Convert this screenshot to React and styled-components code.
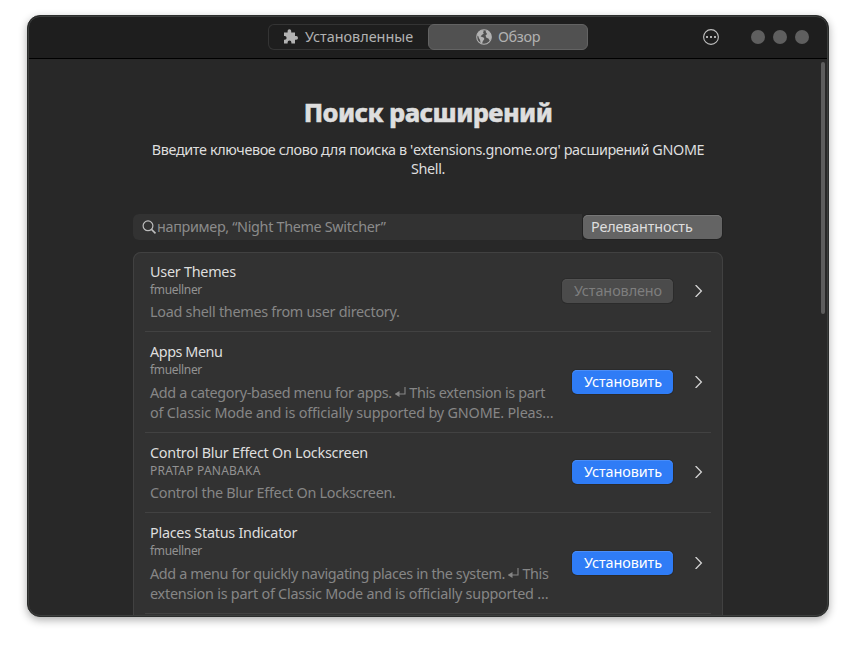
import React from 'react';
import styled, { createGlobalStyle } from 'styled-components';

const Global = createGlobalStyle`
  * { box-sizing: border-box; }
  body { margin: 0; background: #fff; overflow: hidden; }
  button, input { font: inherit; margin: 0; }
`;

const Desktop = styled.div`
  width: 856px;
  height: 656px;
  padding: 15px 27px 39px;
  font: 14.4px/20px 'Noto Sans', sans-serif;
  color: #dedede;
`;

const Window = styled.div`
  position: relative;
  height: 602px;
  display: flex;
  flex-direction: column;
  border-radius: 13px;
  overflow: hidden;
  background: #282828;
  border: 1px solid #2b2d2c;
  box-shadow: 0 3px 9px rgba(0, 0, 0, 0.32);
  &::after {
    content: '';
    position: absolute;
    inset: 0;
    border: 1px solid #3c3e3d;
    border-radius: 12px;
    pointer-events: none;
  }
`;

const HeaderBar = styled.header`
  flex: none;
  height: 43px;
  display: grid;
  grid-template-columns: 1fr 320px 1fr;
  align-items: center;
  background: #1e1e1e;
  border-bottom: 1px solid #000;
`;

const Switcher = styled.nav`
  grid-column: 2;
  display: flex;
  height: 26px;
  border-radius: 6px;
  box-shadow: inset 0 0 0 1px #343434;
`;

const Tab = styled.button`
  width: 160px;
  display: flex;
  align-items: center;
  justify-content: center;
  gap: 6px;
  padding: 0;
  border: 1px solid ${(p) => (p.$active ? '#636363' : 'transparent')};
  border-radius: 6px;
  background: ${(p) => (p.$active ? '#515151' : 'transparent')};
  color: #b2b2b2;
  letter-spacing: ${(p) => (p.$active ? '-0.35px' : '0')};
`;

const Controls = styled.div`
  display: flex;
  align-items: center;
  justify-content: flex-end;
  gap: 8px;
  padding-right: 19px;
`;

const MenuIcon = styled.svg`
  width: 16px;
  height: 16px;
  margin-right: 24px;
`;

const Dot = styled.span`
  width: 14px;
  height: 14px;
  border-radius: 50%;
  background: #5f5f5f;
`;

const Page = styled.main`
  flex: 1;
  min-height: 0;
  position: relative;
  padding: 37px 105px 0;
  overflow: hidden;
`;

const ScrollThumb = styled.div`
  position: absolute;
  top: 3px;
  right: 3px;
  width: 4px;
  height: 252px;
  border-radius: 2px;
  background: #5d5d5d;
`;

const Title = styled.h1`
  margin: 0;
  height: 32px;
  font-size: 25.5px;
  font-weight: 800;
  line-height: 32px;
  letter-spacing: -0.6px;
  -webkit-text-stroke: 0.5px #dedede;
  text-align: center;
`;

const Intro = styled.p`
  margin: 12px 0 36px;
  line-height: 19px;
  letter-spacing: -0.37px;
  text-align: center;
  white-space: pre-line;
`;

const SearchRow = styled.div`
  display: flex;
  align-items: center;
  gap: 1px;
  width: 589px;
  height: 26px;
  margin-bottom: 12px;
`;

const SearchBox = styled.div`
  width: 449px;
  height: 26px;
  display: flex;
  align-items: center;
  padding-left: 8px;
  border-radius: 6px 0 0 6px;
  background: #323232;
  color: #8b8b8b;
  letter-spacing: -0.33px;
`;

const SortButton = styled.button`
  width: 139px;
  height: 24px;
  padding: 0 8px;
  border: 0;
  border-radius: 5px;
  background: #646464;
  box-shadow: inset 0 1px #777, 0 0 0 1px #222;
  color: #dedede;
  letter-spacing: -0.15px;
  text-align: left;
`;

const List = styled.ul`
  width: 590px;
  height: 480px;
  margin: 0;
  padding: 0;
  list-style: none;
  border-radius: 8px;
  background: #323232;
  box-shadow: inset 0 0 0 1px #414141;
`;

const Row = styled.li`
  display: grid;
  grid-template-columns: 1fr auto 8px;
  align-items: center;
  height: ${(p) => (p.$tall ? 101 : 80)}px;
  margin: 0 12px;
  padding: 0 8px ${(p) => (p.$tall ? 0 : 1)}px 5px;
  border-bottom: 1px solid #424242;
`;

const Info = styled.div`
  align-self: start;
  padding-top: 10px;
  white-space: nowrap;
`;

const Name = styled.div`
  letter-spacing: ${(p) => p.$spacing}px;
`;

const Author = styled.div`
  font-size: 12px;
  line-height: 16px;
  letter-spacing: ${(p) => p.$spacing}px;
  color: #929292;
`;

const Description = styled.div`
  margin-top: ${(p) => (p.$tall ? 5 : 4)}px;
  color: #868686;
`;

const Line = styled.div`
  letter-spacing: ${(p) => p.$spacing}px;
`;

const Action = styled.button`
  width: ${(p) => (p.disabled ? 111 : 101)}px;
  height: 24px;
  margin-right: 22px;
  padding: 0 0 0 1px;
  border: 0;
  border-radius: 5px;
  background: ${(p) => (p.disabled ? '#4b4b4b' : '#2f7cf6')};
  color: ${(p) => (p.disabled ? '#7e7e7e' : '#fff')};
  letter-spacing: -0.08px;
  box-shadow: inset 0 1px ${(p) => (p.disabled ? '#525252' : '#4a8df8')}, 0 0 0 1px #2b2b2b;
`;

const Icon = styled.svg`
  flex: none;
  display: block;
`;

const ReturnMark = styled.svg`
  width: 14px;
  height: 11px;
  vertical-align: 0;
`;

const Puzzle = () => (
  <Icon width="16" height="16" viewBox="0 0 16 16" fill="#b2b2b2">
    <path d="M1 3.5h3.6V2.1a1.8 1.8 0 0 1 3.6 0v1.4H12v3.6h1.2a1.8 1.8 0 0 1 0 3.6H12v3.7H8.4v-1a1.9 1.9 0 0 0-3.8 0v1H1v-3.7h.8a1.8 1.8 0 0 0 0-3.6H1z" />
  </Icon>
);

const Globe = () => (
  <Icon width="16" height="16" viewBox="0 0 16 16">
    <circle cx="8" cy="8" r="7.3" fill="none" stroke="#b2b2b2" strokeWidth="1.1" />
    <path fill="#b2b2b2" d="M1 6.5 2.5 3 6 1l2 .8-1 1.4.8 1.2-2 1.6-1.2 1.6 3 1 .8 1.5-1.6 2.1-.8 2.6-1.4-.5-.5-3.4L3 9.3 2.2 7zM10 1.8l2-.2L15 5l.4 4-1.4 3-1.6-2.4-2-.8-.9-2.4 1.6-1.5L9.7 3z" />
  </Icon>
);

const Return = () => (
  <ReturnMark viewBox="0 0 14 11" aria-label="↵">
    <path d="M10 0v7H4" fill="none" stroke="#868686" strokeWidth="1.1" />
    <path d="M-.5 7l5-3v6z" fill="#868686" />
  </ReturnMark>
);

const Chevron = () => (
  <Icon width="8" height="12" viewBox="0 0 8 12">
    <path d="M.6 0 6.4 6 .6 12" fill="none" stroke="#d4d4d4" strokeWidth="1.3" />
  </Icon>
);

const items = [
  { name: 'User Themes', author: 'fmuellner', installed: true, lines: [[-0.28, 'Load shell themes from user directory.']] },
  {
    name: 'Apps Menu',
    nameSpacing: -0.45,
    author: 'fmuellner',
    lines: [
      [-0.34, 'Add a category-based menu for apps. ', 'This extension is part'],
      [-0.18, 'of Classic Mode and is officially supported by GNOME. Pleas…'],
    ],
  },
  { name: 'Control Blur Effect On Lockscreen', author: 'PRATAP PANABAKA', spacing: 0.23, lines: [[-0.28, 'Control the Blur Effect On Lockscreen.']] },
  {
    name: 'Places Status Indicator',
    author: 'fmuellner',
    lines: [
      [-0.37, 'Add a menu for quickly navigating places in the system. ', 'This'],
      [-0.24, 'extension is part of Classic Mode and is officially supported …'],
    ],
  },
];

export default function App() {
  return (
    <Desktop>
      <Global />
      <Window>
        <HeaderBar>
          <Switcher>
            <Tab><Puzzle />Установленные</Tab>
            <Tab $active><Globe />Обзор</Tab>
          </Switcher>
          <Controls>
            <MenuIcon viewBox="0 0 16 16">
              <circle cx="8" cy="8" r="7.4" fill="none" stroke="#c0c0c0" strokeWidth="1.1" />
              <path d="M3 7h2v2H3zM7 7h2v2H7zM11 7h2v2h-2z" fill="#b2b2b2" />
            </MenuIcon>
            <Dot /><Dot /><Dot />
          </Controls>
        </HeaderBar>
        <Page>
          <Title>Поиск расширений</Title>
          <Intro>{"Введите ключевое слово для поиска в 'extensions.gnome.org' расширений GNOME\nShell."}</Intro>
          <SearchRow>
            <SearchBox>
              <Icon width="16" height="16" viewBox="0 0 16 16" fill="none" stroke="#bdbdbd">
                <circle cx="7" cy="6.8" r="4.9" strokeWidth="1.2" />
                <path d="m10.5 10.4 4 4" strokeWidth="1.6" />
              </Icon>
              например, “Night Theme Switcher”
            </SearchBox>
            <SortButton>Релевантность</SortButton>
          </SearchRow>
          <List>
            {items.map((it) => {
              const tall = it.lines.length > 1;
              return (
                <Row key={it.name} $tall={tall}>
                  <Info>
                    <Name $spacing={it.nameSpacing ?? -0.26}>{it.name}</Name>
                    <Author $spacing={it.spacing ?? -0.32}>{it.author}</Author>
                    <Description $tall={tall}>
                      {it.lines.map(([spacing, before, after]) => (
                        <Line key={before} $spacing={spacing}>
                          {before}
                          {after && <><Return />{after}</>}
                        </Line>
                      ))}
                    </Description>
                  </Info>
                  <Action disabled={it.installed}>{it.installed ? 'Установлено' : 'Установить'}</Action>
                  <Chevron />
                </Row>
              );
            })}
          </List>
          <ScrollThumb />
        </Page>
      </Window>
    </Desktop>
  );
}
